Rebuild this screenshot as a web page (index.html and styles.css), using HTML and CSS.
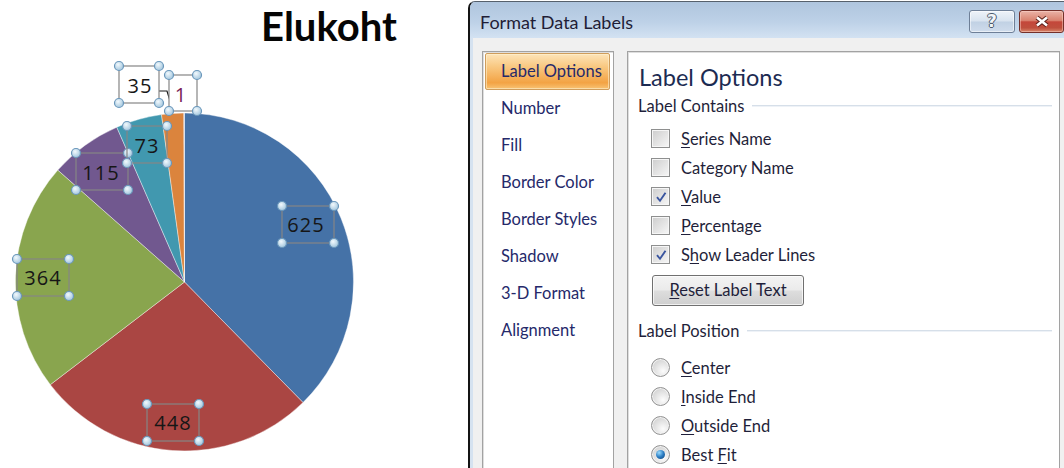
FILE: index.html
```html
<!DOCTYPE html>
<html lang="en">
<head>
<meta charset="utf-8">
<title>Format Data Labels</title>
<link rel="stylesheet" href="styles.css">
</head>
<body>
<div class="screen">
  <section class="chart">
    <h1 class="chart-title">Elukoht</h1>
    <svg class="pie" width="468" height="415" viewBox="0 53 468 415" xmlns="http://www.w3.org/2000/svg">
      <defs>
        <radialGradient id="knob" cx="40%" cy="35%" r="70%">
          <stop offset="0" stop-color="#f2f9fd"/>
          <stop offset="1" stop-color="#9fc4dc"/>
        </radialGradient>
      </defs>
      <g class="slices">
        <path fill="#4572a7" d="M184.5 282 L184.5 113 A169 169 0 0 1 303 402.5 Z"/>
        <path fill="#aa4643" d="M184.5 282 L303 402.5 A169 169 0 0 1 50.3 384.7 Z"/>
        <path fill="#89a54e" d="M184.5 282 L50.3 384.7 A169 169 0 0 1 57.8 170.1 Z"/>
        <path fill="#71588f" d="M184.5 282 L57.8 170.1 A169 169 0 0 1 116.8 127.2 Z"/>
        <path fill="#4198af" d="M184.5 282 L116.8 127.2 A169 169 0 0 1 161.5 114.6 Z"/>
        <path fill="#db843d" d="M184.5 282 L161.5 114.6 A169 169 0 0 1 183.85 113 Z"/>
        <path fill="#93a9cf" d="M184.5 282 L183.85 113 A169 169 0 0 1 184.5 113 Z"/>
      </g>

      <path class="leader" d="M157 91 H167 L171 104"/>

      <g class="label">
        <rect x="282" y="206" width="52" height="37"/>
        <text x="306" y="232">625</text>
        <circle cx="282" cy="206" r="4.5"/><circle cx="334" cy="206" r="4.5"/>
        <circle cx="282" cy="243" r="4.5"/><circle cx="334" cy="243" r="4.5"/>
      </g>
      <g class="label">
        <rect x="147" y="404" width="52" height="37"/>
        <text x="173" y="430">448</text>
        <circle cx="147" cy="404" r="4.5"/><circle cx="199" cy="404" r="4.5"/>
        <circle cx="147" cy="441" r="4.5"/><circle cx="199" cy="441" r="4.5"/>
      </g>
      <g class="label">
        <rect x="17" y="259" width="52" height="37"/>
        <text x="43" y="285">364</text>
        <circle cx="17" cy="259" r="4.5"/><circle cx="69" cy="259" r="4.5"/>
        <circle cx="17" cy="296" r="4.5"/><circle cx="69" cy="296" r="4.5"/>
      </g>
      <g class="label">
        <rect x="76" y="153" width="52" height="37"/>
        <text x="101" y="180">115</text>
        <circle cx="76" cy="153" r="4.5"/><circle cx="128" cy="153" r="4.5"/>
        <circle cx="76" cy="190" r="4.5"/><circle cx="128" cy="190" r="4.5"/>
      </g>
      <g class="label">
        <rect x="127" y="126" width="40" height="37"/>
        <text x="147" y="153">73</text>
        <circle cx="127" cy="126" r="4.5"/><circle cx="167" cy="126" r="4.5"/>
        <circle cx="127" cy="163" r="4.5"/><circle cx="167" cy="163" r="4.5"/>
      </g>
      <g class="label outside">
        <rect x="119" y="66" width="40" height="37"/>
        <text x="140" y="92.5">35</text>
        <circle cx="119" cy="66" r="4.5"/><circle cx="159" cy="66" r="4.5"/>
        <circle cx="119" cy="103" r="4.5"/><circle cx="159" cy="103" r="4.5"/>
      </g>
      <g class="label outside tiny">
        <rect x="169" y="75" width="28" height="36"/>
        <text x="181" y="101.5">1</text>
        <circle cx="169" cy="75" r="4.5"/><circle cx="197" cy="75" r="4.5"/>
        <circle cx="169" cy="111" r="4.5"/><circle cx="197" cy="111" r="4.5"/>
      </g>
    </svg>
  </section>

  <section class="dialog">
    <header class="titlebar">
      <span class="title">Format Data Labels</span>
      <div class="caption-buttons">
        <button class="cap-btn help" type="button">?</button>
        <button class="cap-btn close" type="button" aria-label="Close">
          <svg width="16" height="13" viewBox="0 0 16 13">
            <path class="x-edge" d="M3 2.5 L13 10.5 M13 2.5 L3 10.5"/>
            <path class="x-face" d="M3 2.5 L13 10.5 M13 2.5 L3 10.5"/>
          </svg>
        </button>
      </div>
    </header>

    <div class="client">
      <nav class="nav">
        <div class="nav-item active">Label Options</div>
        <div class="nav-item">Number</div>
        <div class="nav-item">Fill</div>
        <div class="nav-item">Border Color</div>
        <div class="nav-item">Border Styles</div>
        <div class="nav-item">Shadow</div>
        <div class="nav-item">3-D Format</div>
        <div class="nav-item">Alignment</div>
      </nav>

      <div class="panel">
        <h2 class="panel-title">Label Options</h2>

        <div class="group-head">Label Contains</div>
        <ul class="options">
          <li class="opt"><span class="check"></span><span><u>S</u>eries Name</span></li>
          <li class="opt"><span class="check"></span><span>Cate<u>g</u>ory Name</span></li>
          <li class="opt"><span class="check on"><svg width="12" height="12" viewBox="0 0 12 12"><path d="M2 6.2 L5 9.8 L10.5 1.8"/></svg></span><span><u>V</u>alue</span></li>
          <li class="opt"><span class="check"></span><span><u>P</u>ercentage</span></li>
          <li class="opt"><span class="check on"><svg width="12" height="12" viewBox="0 0 12 12"><path d="M2 6.2 L5 9.8 L10.5 1.8"/></svg></span><span>S<u>h</u>ow Leader Lines</span></li>
        </ul>
        <button class="reset" type="button"><u>R</u>eset Label Text</button>

        <div class="group-head second">Label Position</div>
        <ul class="options">
          <li class="opt"><span class="radio"></span><span><u>C</u>enter</span></li>
          <li class="opt"><span class="radio"></span><span><u>I</u>nside End</span></li>
          <li class="opt"><span class="radio"></span><span><u>O</u>utside End</span></li>
          <li class="opt"><span class="radio on"></span><span>Best <u>F</u>it</span></li>
        </ul>
      </div>
    </div>
  </section>
</div>
</body>
</html>
```

FILE: styles.css
```css
* {
  box-sizing: border-box;
}

html,
body {
  margin: 0;
  padding: 0;
}

body {
  width: 1064px;
  height: 468px;
  overflow: hidden;
  background: #fff;
  font-family: "Lato", "Open Sans", sans-serif;
}

.screen {
  display: flex;
  width: 1064px;
  height: 468px;
  overflow: hidden;
}

/* ---------- chart ---------- */

.chart {
  flex: none;
  width: 468px;
  height: 468px;
  background: #fff;
}

.chart-title {
  margin: 0;
  height: 53px;
  padding-left: 261px;
  font: 700 40px/53px "Lato", sans-serif;
  color: #050505;
}

.pie {
  display: block;
}

.slices path {
  stroke: #fff;
  stroke-width: 0.4;
}

.leader {
  fill: none;
  stroke: #1a1a1a;
  stroke-width: 1.2;
}

.label rect {
  fill: none;
  stroke: #858585;
  stroke-width: 1.2;
}

.label.outside rect {
  fill: #fff;
}

.label text {
  font-family: "Open Sans", sans-serif;
  font-size: 20px;
  letter-spacing: 1px;
  text-anchor: middle;
  fill: #161616;
}

.label.tiny text {
  fill: #7a1e58;
}

.label circle {
  fill: url(#knob);
  stroke: #6a97bb;
  stroke-width: 1.2;
}

/* ---------- dialog ---------- */

.dialog {
  flex: none;
  width: 606px;
  height: 480px;
  margin-top: 1px;
  border-top: 1px solid #56606c;
  border-left: 2px solid #141414;
  border-top-left-radius: 7px;
  background: #d5e2f0;
  overflow: hidden;
  display: flex;
  flex-direction: column;
}

.titlebar {
  flex: none;
  height: 36px;
  display: flex;
  align-items: center;
  padding: 3px 10px 0 10px;
  background: linear-gradient(#afc5de, #bdd1e7 55%, #d3e2f2);
}

.title {
  font-size: 18px;
  color: #1f1d36;
}

.caption-buttons {
  margin-left: auto;
  display: flex;
  gap: 4px;
}

.cap-btn {
  height: 23px;
  padding: 0;
  border-radius: 3px;
  display: flex;
  align-items: center;
  justify-content: center;
}

.help {
  width: 46px;
  border: 1px solid #6e7f97;
  background: linear-gradient(#eef3f9, #d8e3ef 48%, #c1d1e4 52%, #cfdcec);
  box-shadow: inset 0 0 0 1px rgba(255, 255, 255, 0.55);
  font: 700 17px/1 "DejaVu Sans", sans-serif;
  color: #f3f5f8;
  text-shadow: 1px 0 0 #4d5a6c, -1px 0 0 #4d5a6c, 0 1px 0 #4d5a6c, 0 -1px 0 #4d5a6c;
}

.close {
  width: 45px;
  border: 1px solid #74302a;
  background: linear-gradient(#eab3a7, #d9826f 45%, #c4473a 52%, #bf4f3d 80%, #d8886c);
  box-shadow: inset 0 0 0 1px rgba(255, 220, 210, 0.45);
}

.x-edge {
  fill: none;
  stroke: #5a1f19;
  stroke-width: 4.6;
}

.x-face {
  fill: none;
  stroke: #fff;
  stroke-width: 2.6;
}

.client {
  flex: 1;
  margin-left: 3px;
  background: #f0f0f0;
  display: flex;
  gap: 13px;
  padding: 13px 0 0 9px;
}

.nav {
  flex: none;
  width: 132px;
  height: 440px;
  background: #fff;
  border: 1px solid #a2a2a2;
  box-shadow: inset 1px 1px 0 #dedede;
  padding: 1px 3px 0 2px;
}

.nav-item {
  height: 37px;
  line-height: 35px;
  padding-left: 15px;
  border: 1px solid transparent;
  border-radius: 2px;
  font-size: 16.5px;
  color: #25296a;
  white-space: nowrap;
}

.nav-item.active {
  border-color: #cf9d5c;
  background: linear-gradient(#fde4b8, #f9c983 35%, #f3a344 82%, #f8c374);
  box-shadow: inset 0 0 0 1px rgba(255, 244, 214, 0.55);
}

.panel {
  flex: none;
  width: 433px;
  height: 440px;
  background: #fff;
  border: 1px solid #a2a2a2;
  box-shadow: inset 1px 1px 0 #dedede;
  padding: 9px 7px 0 10px;
  color: #1f1f3a;
}

.panel-title {
  margin: 0;
  height: 34px;
  line-height: 33px;
  font-size: 23.5px;
  font-weight: 400;
  color: #1c2b52;
  padding-left: 1px;
}

.group-head {
  display: flex;
  align-items: center;
  height: 22px;
  padding-bottom: 1px;
  font-size: 16.5px;
  white-space: nowrap;
}

.group-head::after {
  content: "";
  flex: 1;
  margin: 1px 0 0 8px;
  height: 2px;
  background: linear-gradient(#d6dfe9 50%, #eef2f7 50%);
}

.group-head.second {
  margin-top: 14px;
}

.options {
  list-style: none;
  margin: 8px 0 0;
  padding: 0 0 0 13px;
}

.group-head.second + .options {
  margin-top: 12px;
}

.opt {
  display: flex;
  align-items: center;
  gap: 11px;
  height: 29px;
  padding-bottom: 2px;
  font-size: 16.5px;
}

.opt u,
.reset u {
  text-underline-offset: 2px;
}

.check {
  flex: none;
  width: 19px;
  height: 19px;
  border: 1px solid #8e8f8f;
  background: linear-gradient(135deg, #cdcdcd, #f7f7f7);
  box-shadow: inset 0 0 0 1px #f6f6f6;
  display: flex;
  align-items: center;
  justify-content: center;
}

.check svg path {
  fill: none;
  stroke: #3b56a0;
  stroke-width: 1.9;
}

.radio {
  flex: none;
  width: 19px;
  height: 19px;
  border-radius: 50%;
  border: 1px solid #929292;
  background: radial-gradient(circle at 65% 70%, #fcfcfc, #d4d4d4 75%);
  box-shadow: inset 0 0 0 1px #f2f2f2;
  display: flex;
  align-items: center;
  justify-content: center;
}

.radio.on::after {
  content: "";
  width: 9px;
  height: 9px;
  border-radius: 50%;
  background: radial-gradient(circle at 35% 30%, #9adcff, #2b7cc2 50%, #0c3d72);
}

.reset {
  display: block;
  margin: 5px 0 0 14px;
  width: 152px;
  height: 31px;
  padding: 0 0 1px;
  border: 1px solid #707070;
  border-radius: 3px;
  background: linear-gradient(#f3f3f3, #ebebeb 48%, #dddddd 52%, #cfcfcf);
  box-shadow: inset 0 0 0 1px rgba(255, 255, 255, 0.7);
  font-family: inherit;
  font-size: 16.5px;
  color: #1f1f3a;
}
```
